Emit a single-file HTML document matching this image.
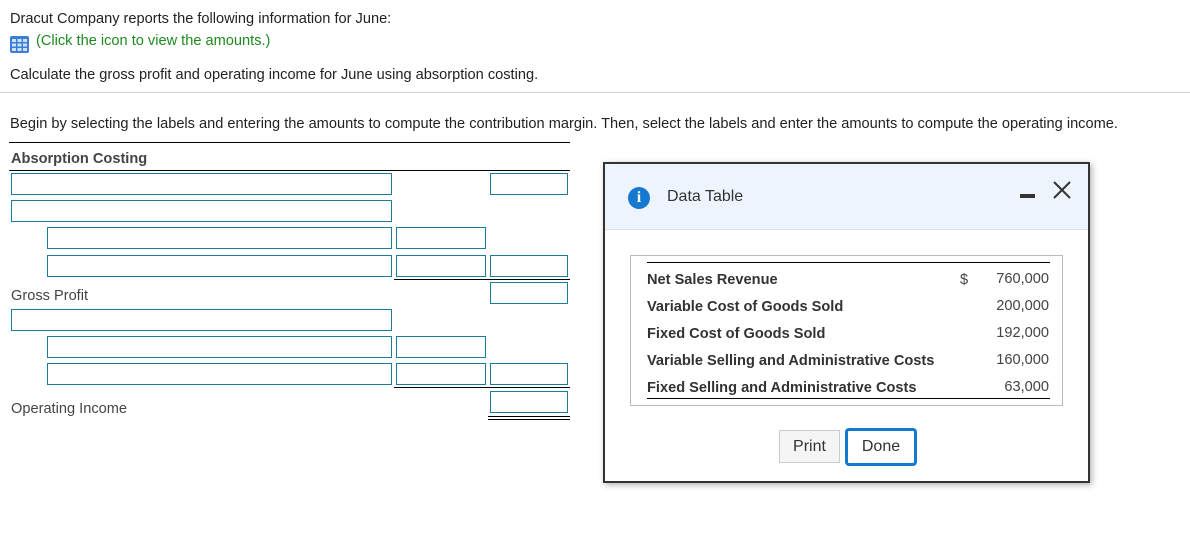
<!DOCTYPE html>
<html><head><style>
body{margin:0;width:1190px;height:540px;background:#fff;font-family:"Liberation Sans",Arial,sans-serif;color:#222;position:relative;overflow:hidden;font-size:14.6px}
.a{position:absolute;white-space:nowrap}
.in{position:absolute;border:1px solid #1b7c9a;box-sizing:border-box;height:22px;background:#fff}
.ln{position:absolute;height:0;border-top:1px solid #000}
</style></head><body>
<div class="a" style="left:10px;top:11px">Dracut Company reports the following information for June:</div>
<svg class="a" style="left:10px;top:36px" width="19" height="17" viewBox="0 0 19 17"><rect x="0" y="0" width="19" height="17" rx="2" fill="#3a7fd5"/><g fill="#cfe0f8"><rect x="2" y="3" width="4" height="3"/><rect x="7.5" y="3" width="4" height="3"/><rect x="13" y="3" width="4" height="3"/><rect x="2" y="7.5" width="4" height="3"/><rect x="7.5" y="7.5" width="4" height="3"/><rect x="13" y="7.5" width="4" height="3"/><rect x="2" y="12" width="4" height="3"/><rect x="7.5" y="12" width="4" height="3"/><rect x="13" y="12" width="4" height="3"/></g></svg>
<div class="a" style="left:36px;top:33px;color:#1e8a1e">(Click the icon to view the amounts.)</div>
<div class="a" style="left:10px;top:67px">Calculate the gross profit and operating income for June using absorption costing.</div>
<div class="a" style="left:0;top:92px;width:1190px;border-top:1px solid #ccd3de"></div>
<div class="a" style="left:10px;top:116px">Begin by selecting the labels and entering the amounts to compute the contribution margin. Then, select the labels and enter the amounts to compute the operating income.</div>
<div class="ln" style="left:9px;top:142px;width:561px"></div>
<div class="a" style="left:11px;top:151px;font-weight:bold;color:#444">Absorption Costing</div>
<div class="ln" style="left:9px;top:170px;width:561px"></div>
<div class="in" style="left:11px;top:173px;width:381px"></div>
<div class="in" style="left:490px;top:173px;width:78px"></div>
<div class="in" style="left:11px;top:200px;width:381px"></div>
<div class="in" style="left:47px;top:227px;width:345px"></div>
<div class="in" style="left:396px;top:227px;width:90px"></div>
<div class="in" style="left:47px;top:255px;width:345px"></div>
<div class="in" style="left:396px;top:255px;width:90px"></div>
<div class="in" style="left:490px;top:255px;width:78px"></div>
<div class="ln" style="left:394px;top:279px;width:176px"></div>
<div class="a" style="left:11px;top:288px;color:#444">Gross Profit</div>
<div class="in" style="left:490px;top:282px;width:78px"></div>
<div class="in" style="left:11px;top:309px;width:381px"></div>
<div class="in" style="left:47px;top:336px;width:345px"></div>
<div class="in" style="left:396px;top:336px;width:90px"></div>
<div class="in" style="left:47px;top:363px;width:345px"></div>
<div class="in" style="left:396px;top:363px;width:90px"></div>
<div class="in" style="left:490px;top:363px;width:78px"></div>
<div class="ln" style="left:394px;top:387px;width:176px"></div>
<div class="a" style="left:11px;top:401px;color:#444">Operating Income</div>
<div class="in" style="left:490px;top:391px;width:78px"></div>
<div class="ln" style="left:488px;top:416px;width:82px"></div>
<div class="ln" style="left:488px;top:419px;width:82px"></div>

<div class="a" style="left:603px;top:162px;width:487px;height:321px;border:2px solid #333;box-sizing:border-box;background:#fff;box-shadow:2px 2px 6px rgba(0,0,0,.3)">
 <div class="a" style="left:0;top:0;width:483px;height:65px;background:#eef4fd;border-bottom:1px solid #d3e2f3"></div>
 <div class="a" style="left:23px;top:23px;width:22px;height:22px;border-radius:50%;background:#1479cf;color:#fff;font:bold 16px 'Liberation Serif',serif;text-align:center;line-height:22px">i</div>
 <div class="a" style="left:62px;top:24px;font-size:16px;color:#333">Data Table</div>
 <div class="a" style="left:415px;top:30px;width:15px;height:4px;background:#333"></div>
 <svg class="a" style="left:447px;top:17px" width="20" height="18" viewBox="0 0 20 18"><path d="M2 1L18 17M18 1L2 17" stroke="#333" stroke-width="2"/></svg>
 <div class="a" style="left:25px;top:91px;width:433px;height:151px;border:1px solid #bbb;box-sizing:border-box"></div>
 <div class="ln" style="left:42px;top:98px;width:403px"></div>
 <div class="ln" style="left:42px;top:234px;width:403px"></div>
 <div class="a" style="left:42px;top:103px;font-weight:bold;color:#333;line-height:27px">Net Sales Revenue<br>Variable Cost of Goods Sold<br>Fixed Cost of Goods Sold<br>Variable Selling and Administrative Costs<br>Fixed Selling and Administrative Costs</div>
 <div class="a" style="left:355px;top:103px;color:#444;line-height:27px">$</div>
 <div class="a" style="left:370px;top:102px;width:74px;text-align:right;color:#444;line-height:27px">760,000<br>200,000<br>192,000<br>160,000<br>63,000</div>
 <div class="a" style="left:174px;top:266px;width:61px;height:33px;border:1px solid #ccc;box-sizing:border-box;background:#f5f5f5;text-align:center;line-height:31px;font-size:16px;color:#333">Print</div>
 <div class="a" style="left:240px;top:264px;width:72px;height:38px;border:3px solid #1479cf;border-radius:4px;box-sizing:border-box;text-align:center;line-height:32px;font-size:16px;color:#333">Done</div>
</div>
</body></html>
